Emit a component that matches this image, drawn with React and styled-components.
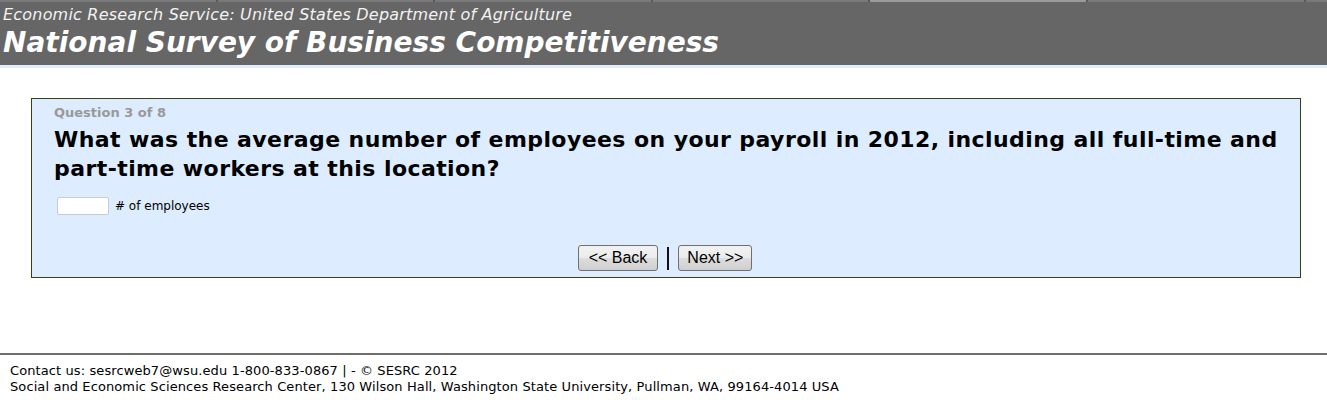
import React from 'react';
import styled, { createGlobalStyle } from 'styled-components';

const GlobalStyle = createGlobalStyle`
  html, body {
    margin: 0;
    padding: 0;
    background: #fff;
    font-family: "DejaVu Sans", Verdana, sans-serif;
  }
`;

const Header = styled.header`
  background: #666666;
  height: 65px;
  border-bottom: 3px solid #dfeefd;
  display: flex;
  flex-direction: column;
  overflow: hidden;
`;

const TabStrip = styled.div`
  display: flex;
  height: 2px;
`;

const Tab = styled.div`
  flex: 0 0 217.6px;
  height: 2px;
  background: ${p => (p.$active ? '#9a9a9a' : '#7a7a7a')};
  border-right: 2px solid #5a5a5a;
  box-sizing: border-box;
`;

const Agency = styled.div`
  font-family: "DejaVu Sans", Tahoma, sans-serif;
  font-style: italic;
  font-size: 16px;
  letter-spacing: 0.2px;
  color: #f2f2f2;
  padding: 3px 0 0 3px;
  line-height: 20px;
`;

const Title = styled.h1`
  margin: 0;
  font-family: "DejaVu Sans", Tahoma, sans-serif;
  font-style: italic;
  font-weight: bold;
  font-size: 28px;
  color: #fff;
  padding-left: 3px;
  line-height: 36px;
`;

const Main = styled.main`
  padding: 30px 26px 0 31px;
  height: 285px;
  box-sizing: border-box;
`;

const QuestionBox = styled.section`
  background: #ddecfe;
  border: 1px solid #334411;
  padding: 6px 22px 6px 22px;
  height: 180px;
  box-sizing: border-box;
  display: flex;
  flex-direction: column;
`;

const Counter = styled.div`
  font-size: 13px;
  font-weight: bold;
  color: #999;
  line-height: 16px;
`;

const Question = styled.h2`
  margin: 4px 0 0;
  font-size: 22px;
  font-weight: bold;
  letter-spacing: 0.42px;
  line-height: 29px;
  color: #000;
`;

const AnswerRow = styled.label`
  display: flex;
  align-items: center;
  gap: 6px;
  margin: 14px 0 0 3px;
  font-size: 12px;
  color: #000;
`;

const NumberInput = styled.input`
  width: 52px;
  height: 18px;
  box-sizing: border-box;
  border: 1px solid #c6cdd6;
  border-radius: 2px;
  background: #fff;
`;

const Nav = styled.div`
  margin-top: auto;
  display: flex;
  justify-content: center;
  align-items: center;
  gap: 9px;
  padding-right: 2px;
`;

const NavButton = styled.button`
  font-family: "Liberation Sans", Arial, sans-serif;
  font-size: 16px;
  color: #000;
  height: 26px;
  padding: 0 ${p => p.$pad}px;
  border: 1px solid #707070;
  border-radius: 3px;
  background: linear-gradient(#f2f2f2, #ebebeb 50%, #dddddd 51%, #cfcfcf);
`;

const Divider = styled.span`
  width: 2px;
  height: 23px;
  background: #111;
`;

const Footer = styled.footer`
  border-top: 2px solid #6e6e6e;
  padding: 8px 10px;
  font-family: "DejaVu Sans", Tahoma, sans-serif;
  font-size: 13px;
  letter-spacing: 0.1px;
  line-height: 16px;
  color: #000;
`;

export default function App() {
  return (
    <>
      <GlobalStyle />
      <Header>
        <TabStrip>
          {[0, 1, 2, 3, 4, 5, 6].map(i => (
            <Tab key={i} $active={i === 4} />
          ))}
        </TabStrip>
        <Agency>Economic Research Service: United States Department of Agriculture</Agency>
        <Title>National Survey of Business Competitiveness</Title>
      </Header>
      <Main>
        <QuestionBox>
          <Counter>Question 3 of 8</Counter>
          <Question>
            What was the average number of employees on your payroll in 2012, including all full-time and
            part-time workers at this location?
          </Question>
          <AnswerRow>
            <NumberInput type="text" />
            # of employees
          </AnswerRow>
          <Nav>
            <NavButton $pad={10}>&lt;&lt; Back</NavButton>
            <Divider />
            <NavButton $pad={8}>Next &gt;&gt;</NavButton>
          </Nav>
        </QuestionBox>
      </Main>
      <Footer>
        <div>Contact us: sesrcweb7@wsu.edu 1-800-833-0867 | - © SESRC 2012</div>
        <div>Social and Economic Sciences Research Center, 130 Wilson Hall, Washington State University, Pullman, WA, 99164-4014 USA</div>
      </Footer>
    </>
  );
}
